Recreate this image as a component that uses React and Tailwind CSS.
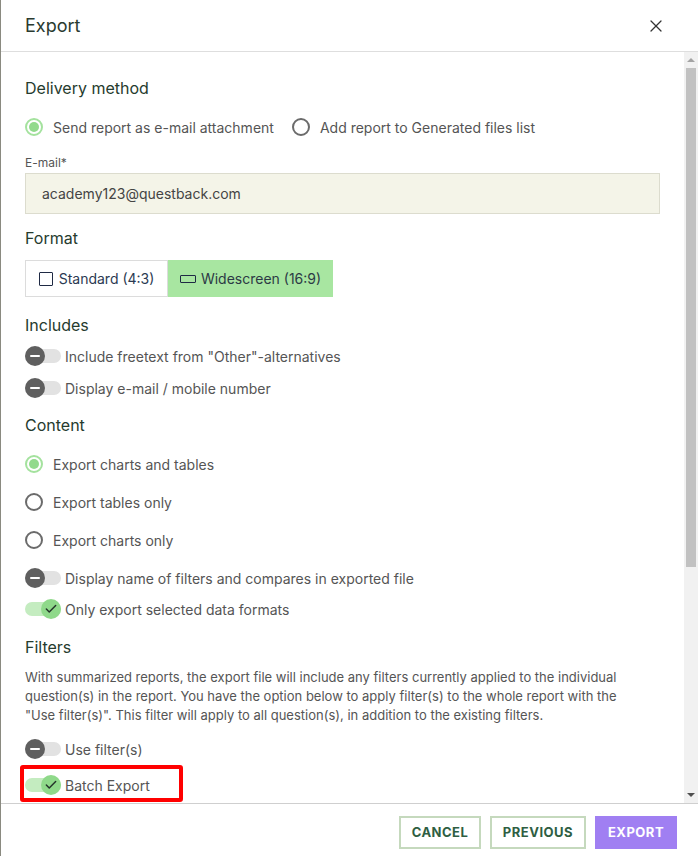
import { X, Check } from "lucide-react";

const font = { fontFamily: "Inter, 'Noto Sans', sans-serif" };

function Radio({ checked, label }) {
  return (
    <label className="flex items-center h-[24px] gap-[10px] text-[14px] text-[#555]">
      {checked ? (
        <span className="w-[18px] h-[18px] rounded-full border-2 border-[#a4e29e] flex items-center justify-center">
          <span className="w-[10px] h-[10px] rounded-full bg-[#92da8c]" />
        </span>
      ) : (
        <span className="w-[18px] h-[18px] rounded-full border-2 border-[#6b6b6b]" />
      )}
      <span>{label}</span>
    </label>
  );
}

function Toggle({ on, label }) {
  return (
    <div className="flex items-center h-[24px] gap-[4px] text-[14px] text-[#555]">
      <span
        className={`relative w-[36px] h-[14px] rounded-full ${
          on ? "bg-[#c4ecc0]" : "bg-[#e2e2e2]"
        }`}
      >
        {on ? (
          <span className="absolute right-0 top-[-3px] w-[20px] h-[20px] rounded-full bg-[#8fd98a] flex items-center justify-center">
            <Check className="w-[14px] h-[14px] text-[#24332a]" strokeWidth={2.5} />
          </span>
        ) : (
          <span className="absolute left-0 top-[-3px] w-[20px] h-[20px] rounded-full bg-[#5f5f5f] flex items-center justify-center">
            <span className="w-[10px] h-[2px] bg-white rounded" />
          </span>
        )}
      </span>
      <span>{label}</span>
    </div>
  );
}

function Heading({ children, className = "" }) {
  return (
    <h3 className={`text-[16px] leading-[24px] text-[#263b2e] ${className}`}>{children}</h3>
  );
}

export default function App() {
  return (
    <div
      style={font}
      className="w-[698px] h-[856px] flex flex-col bg-white border-l border-[#8a8a80] overflow-hidden"
    >
      {/* header */}
      <div className="h-[52px] flex-shrink-0 flex items-center justify-between pl-[24px] pr-[32px] border-b border-[#dedede]">
        <h2 className="text-[18px] text-[#2a3a30]">Export</h2>
        <X className="w-[20px] h-[20px] text-[#333]" strokeWidth={1.5} />
      </div>

      {/* body + scrollbar */}
      <div className="flex-1 flex min-h-0">
        <div className="flex-1 overflow-hidden pl-[24px] pr-[24px] pt-[24px]">
          <Heading>Delivery method</Heading>
          <div className="flex items-center gap-[18px] mt-[15px]">
            <Radio checked label="Send report as e-mail attachment" />
            <Radio label="Add report to Generated files list" />
          </div>

          <div className="mt-[16px] text-[12px] leading-[16px] text-[#555]">E-mail*</div>
          <div className="mt-[2px] h-[41px] flex items-center px-[16px] bg-[#f4f4e8] border border-[#dcdcce] text-[14px] text-[#444]">
            academy123@questback.com
          </div>

          <Heading className="mt-[12px]">Format</Heading>
          <div className="mt-[10px] flex h-[37px] w-[308px]">
            <div className="w-[143px] flex items-center justify-center gap-[6px] border border-[#dcdcdc] text-[14px] text-[#2c3a52]">
              <span className="w-[14px] h-[14px] border border-[#1f2a44] rounded-[1px]" />
              Standard (4:3)
            </div>
            <div className="w-[165px] flex items-center justify-center gap-[5px] bg-[#a8e6a1] text-[14px] text-[#2c3a45]">
              <span className="w-[16px] h-[8px] border border-[#1f2a44] rounded-[1px]" />
              Widescreen (16:9)
            </div>
          </div>

          <Heading className="mt-[16px]">Includes</Heading>
          <div className="mt-[7px] flex flex-col gap-[8px]">
            <Toggle label={'Include freetext from "Other"-alternatives'} />
            <Toggle label="Display e-mail / mobile number" />
          </div>

          <Heading className="mt-[13px]">Content</Heading>
          <div className="mt-[15px] flex flex-col gap-[14px]">
            <Radio checked label="Export charts and tables" />
            <Radio label="Export tables only" />
            <Radio label="Export charts only" />
          </div>
          <div className="mt-[14px] flex flex-col gap-[7px]">
            <Toggle label="Display name of filters and compares in exported file" />
            <Toggle on label="Only export selected data formats" />
          </div>

          <Heading className="mt-[14px]">Filters</Heading>
          <p className="mt-[9px] text-[13px] leading-[19px] text-[#555] whitespace-nowrap">
            With summarized reports, the export file will include any filters currently applied to the individual
            <br />
            question(s) in the report. You have the option below to apply filter(s) to the whole report with the
            <br />
            "Use filter(s)". This filter will apply to all question(s), in addition to the existing filters.
          </p>

          <div className="mt-[12px] flex flex-col gap-[12px]">
            <Toggle label="Use filter(s)" />
            <div className="relative">
              <Toggle on label="Batch Export" />
              <span className="absolute left-[-5px] top-[-8px] w-[163px] h-[37px] border-4 border-[#ff0000] rounded-[3px] pointer-events-none" />
            </div>
          </div>
        </div>

        {/* scrollbar */}
        <div className="w-[14px] flex-shrink-0 bg-[#f1f1f1] flex flex-col items-center">
          <div className="h-[16px] flex items-center justify-center">
            <span className="w-0 h-0 border-l-[4px] border-r-[4px] border-b-[4px] border-l-transparent border-r-transparent border-b-[#a3a3a3]" />
          </div>
          <div className="w-[10px] h-[499px] bg-[#c1c1c1]" />
          <div className="flex-1" />
          <div className="h-[16px] flex items-center justify-center">
            <span className="w-0 h-0 border-l-[4px] border-r-[4px] border-t-[4px] border-l-transparent border-r-transparent border-t-[#505050]" />
          </div>
        </div>
      </div>

      {/* footer */}
      <div className="h-[53px] flex-shrink-0 border-t border-[#cfcfcf] flex items-start justify-end gap-[9px] pt-[12px] pr-[21px]">
        <button className="w-[82px] h-[33px] border-2 border-[#c5d9bd] text-[13px] font-bold tracking-[0.5px] text-[#2e5e42]">
          CANCEL
        </button>
        <button className="w-[96px] h-[33px] border-2 border-[#c5d9bd] text-[13px] font-bold tracking-[0.5px] text-[#2e5e42]">
          PREVIOUS
        </button>
        <button className="w-[82px] h-[33px] bg-[#a07ff2] text-[13px] font-bold tracking-[0.5px] text-white">
          EXPORT
        </button>
      </div>
    </div>
  );
}
